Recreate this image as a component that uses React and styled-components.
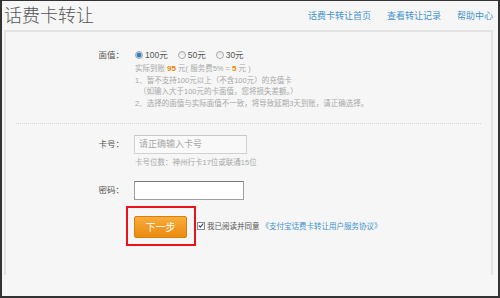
import styled, { createGlobalStyle } from "styled-components";

const Global = createGlobalStyle`
    html, body {
        margin: 0;
        padding: 0;
        background: #f6f6f6;
    }
    * {
        box-sizing: border-box;
    }
`;

const Frame = styled.div`
    width: 500px;
    height: 298px;
    border: 2px solid #333;
    border-top-width: 1px;
    background: #f6f6f6;
    display: flex;
    flex-direction: column;
    font-family: "Liberation Sans", "Noto Sans CJK SC", sans-serif;
    overflow: hidden;
`;

const Header = styled.header`
    height: 29px;
    display: flex;
    align-items: center;
    justify-content: space-between;
    padding: 0 5px 0 2px;
`;

const Title = styled.h1`
    margin: 0;
    font-size: 18px;
    font-weight: 300;
    color: #555;
    line-height: 29px;
    padding-top: 2px;
`;

const Nav = styled.nav`
    display: flex;
    gap: 16px;
`;

const NavLink = styled.a`
    font-size: 9px;
    color: #3f92cc;
    text-decoration: none;
`;

const Panel = styled.section`
    flex: 1;
    margin: 0 5px 21px 2px;
    border: 2px solid #e3e3e3;
    border-bottom: none;
    padding-top: 17px;
`;

const Row = styled.div`
    display: flex;
    align-items: center;
    margin-top: ${(p) => p.$top || 0}px;
`;

const Label = styled.span`
    width: 118px;
    margin-right: 10px;
    text-align: right;
    font-size: 8.5px;
    color: #555;
    line-height: 12px;
`;

const Radios = styled.div`
    display: flex;
    gap: 10px;
    padding-left: 1px;
`;

const RadioItem = styled.label`
    display: flex;
    align-items: center;
    gap: 2px;
    font-size: 8.5px;
    color: #555;
    line-height: 12px;
`;

const RadioDot = styled.span`
    width: 8px;
    height: 8px;
    border-radius: 50%;
    border: 1px solid #a8a8a8;
    background: ${(p) =>
        p.$on
            ? "radial-gradient(circle, #2f7fc0 0 2px, #9cc6e6 2.5px, #e8f1f8 3.5px)"
            : "linear-gradient(#e4e4e4, #fbfbfb)"};
`;

const Notes = styled.div`
    margin: 2px 0 0 129px;
    font-size: 7.5px;
    line-height: 11.7px;
    color: #a8a8a8;
`;

const NoteLine = styled.div`
    padding-left: ${(p) => p.$indent || 0}px;
    white-space: nowrap;
`;

const Num = styled.b`
    color: #f08300;
    font-size: 8px;
`;

const Divider = styled.hr`
    margin: 13px 10px 0 10px;
    border: none;
    border-top: 1px dotted #d6d6d6;
    height: 0;
`;

const Input = styled.input`
    width: ${(p) => p.$w}px;
    height: 19px;
    padding: 0 4px;
    font-family: inherit;
    font-size: 9px;
    color: #333;
    border: 1px solid ${(p) => (p.$dark ? "#a0a0a0" : "#d2d2d2")};
    border-top-color: ${(p) => (p.$dark ? "#7a7a7a" : "#c8c8c8")};
    background: ${(p) => (p.$dark ? "#fff" : "#f9f9f9")};
    outline: none;

    &::placeholder {
        color: #a8a8a8;
    }
`;

const Hint = styled.div`
    margin: 3px 0 0 129px;
    font-size: 7.5px;
    line-height: 12px;
    color: #a8a8a8;
`;

const Actions = styled.div`
    display: flex;
    align-items: center;
    margin: 6px 0 0 120px;
`;

const Highlight = styled.div`
    border: 2px solid #e8141a;
    padding: 8px 7px 6px 6px;
    height: 40px;
`;

const NextButton = styled.button`
    width: 53px;
    height: 22px;
    border: 1px solid #d9800a;
    border-radius: 2px;
    background: linear-gradient(#f8ad3c, #ea8a0e);
    color: #fff;
    font-family: inherit;
    font-size: 10px;
    padding: 0;
`;

const Agree = styled.div`
    display: flex;
    align-items: center;
    gap: 2px;
    margin-left: 1px;
    font-size: 7.5px;
    color: #555;
    white-space: nowrap;
`;

const Check = styled.span`
    width: 8px;
    height: 8px;
    border: 1px solid #8a8a8a;
    background: #fff;
    display: flex;
    align-items: center;
    justify-content: center;
`;

const AgreeLink = styled.a`
    color: #3f92cc;
    text-decoration: none;
`;

function App() {
    return (
        <>
            <Global />
            <Frame>
                <Header>
                    <Title>话费卡转让</Title>
                    <Nav>
                        <NavLink>话费卡转让首页</NavLink>
                        <NavLink>查看转让记录</NavLink>
                        <NavLink>帮助中心</NavLink>
                    </Nav>
                </Header>
                <Panel>
                    <Row>
                        <Label>面值：</Label>
                        <Radios>
                            <RadioItem><RadioDot $on />100元</RadioItem>
                            <RadioItem><RadioDot />50元</RadioItem>
                            <RadioItem><RadioDot />30元</RadioItem>
                        </Radios>
                    </Row>
                    <Notes>
                        <NoteLine>实际到账 <Num>95</Num> 元( 服务费5% = <Num>5</Num> 元 )</NoteLine>
                        <NoteLine>1、暂不支持100元以上（不含100元）的充值卡</NoteLine>
                        <NoteLine $indent={4}>（如输入大于100元的卡面值，您将损失差额。）</NoteLine>
                        <NoteLine>2、选择的面值与实际面值不一致，将导致延期3天到账，请正确选择。</NoteLine>
                    </Notes>
                    <Divider />
                    <Row $top={11}>
                        <Label>卡号：</Label>
                        <Input $w={113} placeholder="请正确输入卡号" />
                    </Row>
                    <Hint>卡号位数：神州行卡17位或联通15位</Hint>
                    <Row $top={12}>
                        <Label>密码：</Label>
                        <Input $w={110} $dark type="password" />
                    </Row>
                    <Actions>
                        <Highlight>
                            <NextButton>下一步</NextButton>
                        </Highlight>
                        <Agree>
                            <Check>
                                <svg width="7" height="7" viewBox="0 0 7 7">
                                    <path d="M1 3.5 L2.8 5.3 L6 1.2" fill="none" stroke="#2c4a6e" strokeWidth="1.3" />
                                </svg>
                            </Check>
                            <span>我已阅读并同意</span>
                            <AgreeLink>《支付宝话费卡转让用户服务协议》</AgreeLink>
                        </Agree>
                    </Actions>
                </Panel>
            </Frame>
        </>
    );
}

export default App;
